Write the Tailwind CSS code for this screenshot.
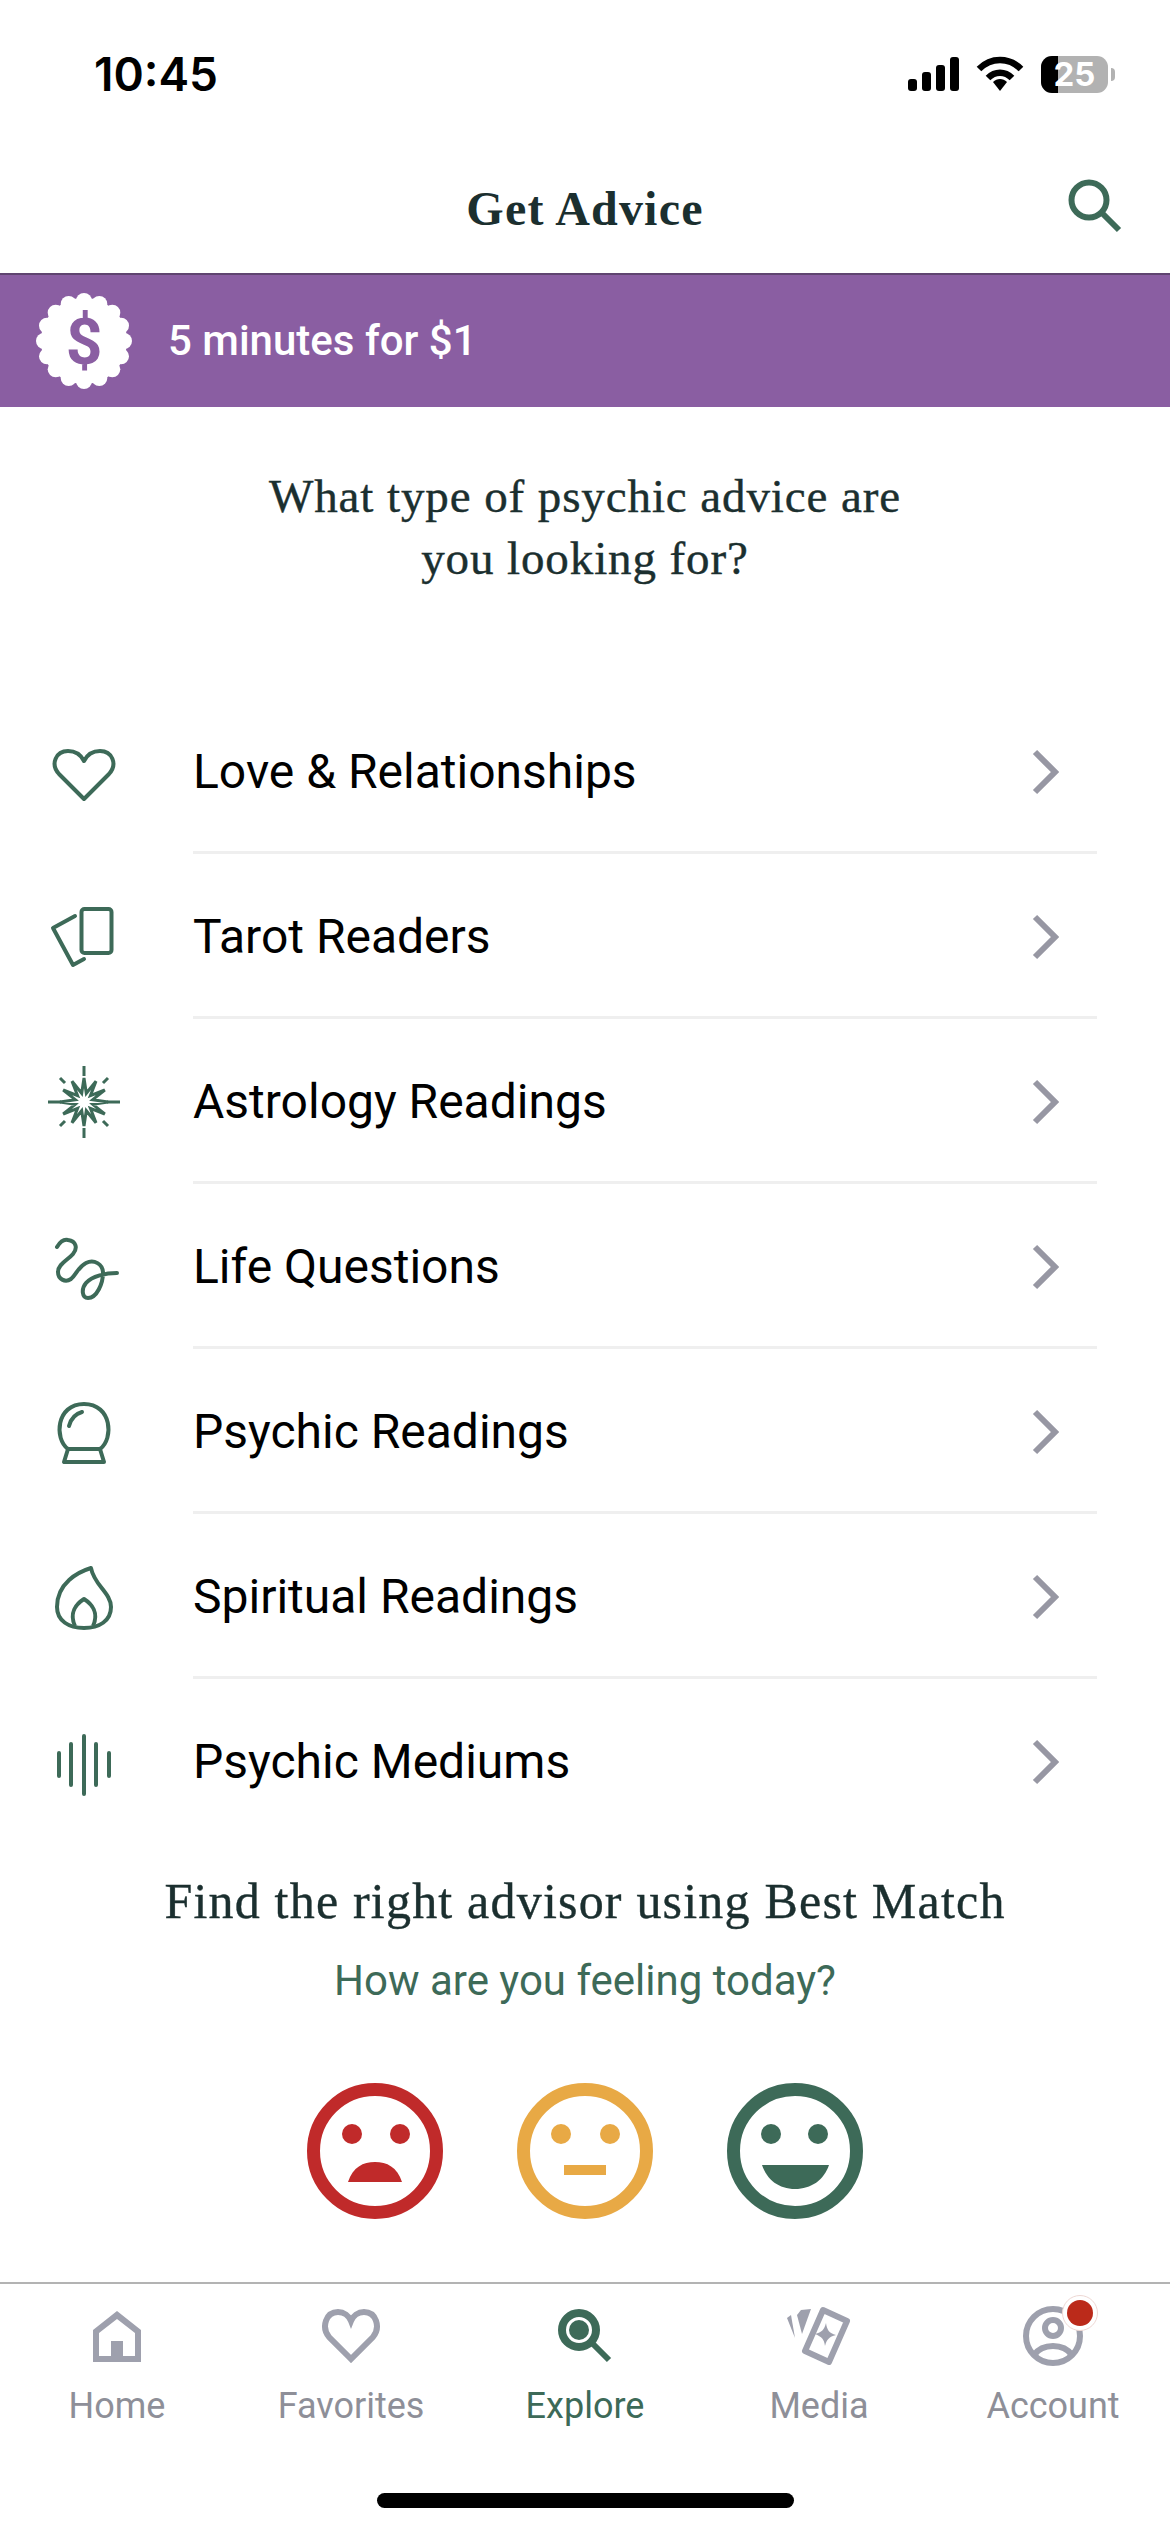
<!DOCTYPE html>
<html lang="en">
<head>
    <meta charset="UTF-8">
    <meta name="viewport" content="width=device-width, initial-scale=1.0">
    <title>Get Advice</title>
    <script src="https://cdn.jsdelivr.net/npm/@tailwindcss/browser@4"></script>
</head>
<body class="bg-white">
    <div class="w-[1170px] h-[2532px] flex flex-col bg-white overflow-hidden font-['Roboto',sans-serif]">

        <!-- Status bar -->
        <div class="h-[148px] flex items-center justify-between pl-[94px] pr-[55px] text-black">
            <span class="font-['Inter',sans-serif] font-semibold text-[46px] leading-none">10:45</span>
            <div class="flex items-center">
                <svg width="51" height="34" viewBox="0 0 51 34" fill="#000">
                    <rect x="0" y="22" width="9" height="12" rx="3"/>
                    <rect x="14" y="15" width="9" height="19" rx="3"/>
                    <rect x="28" y="8" width="9" height="26" rx="3"/>
                    <rect x="42" y="0" width="9" height="34" rx="3"/>
                </svg>
                <svg class="ml-[17px]" width="48" height="36" viewBox="0 0 48 36" fill="none" stroke="#000" stroke-width="6.5">
                    <path d="M3 13 C15 1 33 1 45 13"/>
                    <path d="M12 22 C19 15 29 15 36 22"/>
                    <path d="M17 26 L24 35 L31 26 C27 22 21 22 17 26 Z" fill="#000" stroke="none"/>
                </svg>
                <div class="ml-[17px] flex items-center">
                    <div class="relative w-[67px] h-[37px] rounded-[11px] bg-[#b2b2b2] flex items-center justify-center">
                        <div class="absolute left-0 top-0 bottom-0 w-[17px] rounded-l-[11px] bg-black"></div>
                        <span class="relative font-['Inter',sans-serif] font-bold text-[33px] leading-none text-white">25</span>
                    </div>
                    <div class="ml-[3px] w-[4px] h-[13px] rounded-r-full bg-[#b2b2b2]"></div>
                </div>
            </div>
        </div>

        <!-- Nav -->
        <div class="relative h-[125px] flex items-center justify-center">
            <h1 class="font-['Liberation_Serif',serif] font-bold text-[48px] leading-none tracking-[1.2px] text-[#1b2f2f] -mt-[4px]">Get Advice</h1>
            <svg class="absolute left-[1068px] top-[31px]" width="54" height="54" viewBox="0 0 54 54" fill="none" stroke="#3d6a58" stroke-width="6">
                <circle cx="21" cy="21" r="17.5"/>
                <path d="M33 33 L51 51"/>
            </svg>
        </div>

        <!-- Promo banner -->
        <div class="h-[134px] flex items-center pl-[36px] bg-[#8a5ea2] border-t-2 border-[#5f4470]">
            <svg width="96" height="96" viewBox="0 0 96 96" fill="#fff">
                <circle cx="48" cy="48" r="43"/>
                <circle cx="48" cy="8" r="8"/><circle cx="63.3" cy="11" r="8"/><circle cx="76.3" cy="19.7" r="8"/><circle cx="85" cy="32.7" r="8"/>
                <circle cx="88" cy="48" r="8"/><circle cx="85" cy="63.3" r="8"/><circle cx="76.3" cy="76.3" r="8"/><circle cx="63.3" cy="85" r="8"/>
                <circle cx="48" cy="88" r="8"/><circle cx="32.7" cy="85" r="8"/><circle cx="19.7" cy="76.3" r="8"/><circle cx="11" cy="63.3" r="8"/>
                <circle cx="8" cy="48" r="8"/><circle cx="11" cy="32.7" r="8"/><circle cx="19.7" cy="19.7" r="8"/><circle cx="32.7" cy="11" r="8"/>
                <text x="48" y="71" text-anchor="middle" font-family="Roboto" font-weight="700" font-size="64" fill="#8a5ea2">$</text>
            </svg>
            <span class="ml-[36px] text-[42px] font-medium leading-none text-white">5 minutes for $1</span>
        </div>

        <!-- Question -->
        <div class="h-[282px] pt-[58px] text-center font-['Liberation_Serif',serif] text-[47px] leading-[62px] tracking-[0.9px] text-[#1b2f2f] [-webkit-text-stroke:0.4px_#1b2f2f]">
            <p>What type of psychic advice are</p>
            <p>you looking for?</p>
        </div>

        <!-- Categories -->
        <div class="flex flex-col">
            <div class="h-[165px] flex items-center">
                <div class="w-[168px] flex justify-center">
                    <svg width="72" height="72" viewBox="0 0 72 72" fill="none" stroke="#3d6a58" stroke-width="4" stroke-linejoin="round">
                        <path d="M36 63 L11 38 C2 28 8 15 20 15 C27 15 33 19 36 25 C39 19 45 15 52 15 C64 15 70 28 61 38 Z"/>
                    </svg>
                </div>
                <div class="ml-[25px] w-[904px] h-full pt-[3px] flex items-center justify-between border-b-[3px] border-[#efefef] pr-[38px]">
                    <span class="text-[48px] leading-none text-black">Love &amp; Relationships</span>
                    <svg width="28" height="46" viewBox="0 0 28 46" fill="none" stroke="#9797a3" stroke-width="6"><path d="M4 3 L24 23 L4 43"/></svg>
                </div>
            </div>
            <div class="h-[165px] flex items-center">
                <div class="w-[168px] flex justify-center">
                    <svg width="72" height="72" viewBox="0 0 72 72" fill="none" stroke="#3d6a58" stroke-width="4" stroke-linecap="round" stroke-linejoin="round">
                        <rect x="33.5" y="8" width="30" height="44" rx="3"/>
                        <path d="M27 15 L5 27 L25 64 L36 58"/>
                    </svg>
                </div>
                <div class="ml-[25px] w-[904px] h-full pt-[3px] flex items-center justify-between border-b-[3px] border-[#efefef] pr-[38px]">
                    <span class="text-[48px] leading-none text-black">Tarot Readers</span>
                    <svg width="28" height="46" viewBox="0 0 28 46" fill="none" stroke="#9797a3" stroke-width="6"><path d="M4 3 L24 23 L4 43"/></svg>
                </div>
            </div>
            <div class="h-[165px] flex items-center">
                <div class="w-[168px] flex justify-center">
                    <svg width="72" height="72" viewBox="0 0 72 72" fill="none" stroke="#3d6a58" stroke-width="3">
                        <polygon points="36,12 38.3,27.3 48,15.2 42.4,29.6 56.8,24 44.7,33.7 60,36 44.7,38.3 56.8,48 42.4,42.4 48,56.8 38.3,44.7 36,60 33.7,44.7 24,56.8 29.6,42.4 15.2,48 27.3,38.3 12,36 27.3,33.7 15.2,24 29.6,29.6 24,15.2 33.7,27.3"/>
                        <path d="M36 0 V10 M36 62 V72 M0 36 H13 M59 36 H72 M12 12 L17 17 M60 12 L55 17 M12 60 L17 55 M60 60 L55 55"/>
                    </svg>
                </div>
                <div class="ml-[25px] w-[904px] h-full pt-[3px] flex items-center justify-between border-b-[3px] border-[#efefef] pr-[38px]">
                    <span class="text-[48px] leading-none text-black">Astrology Readings</span>
                    <svg width="28" height="46" viewBox="0 0 28 46" fill="none" stroke="#9797a3" stroke-width="6"><path d="M4 3 L24 23 L4 43"/></svg>
                </div>
            </div>
            <div class="h-[165px] flex items-center">
                <div class="w-[168px] flex justify-center">
                    <svg width="72" height="72" viewBox="0 0 72 72" fill="none" stroke="#3d6a58" stroke-width="4" stroke-linecap="round">
                        <path d="M9 16 C12 11 16 8 20 9 C28 10 30 17 25 23 C20 29 10 33 10 41 C10 48 17 52 23 48 C28 44 30 36 38 32 C46 28 55 33 55 42 C55 52 49 67 40 67 C34 67 33 58 38 52 C44 45 58 42 69 42"/>
                    </svg>
                </div>
                <div class="ml-[25px] w-[904px] h-full pt-[3px] flex items-center justify-between border-b-[3px] border-[#efefef] pr-[38px]">
                    <span class="text-[48px] leading-none text-black">Life Questions</span>
                    <svg width="28" height="46" viewBox="0 0 28 46" fill="none" stroke="#9797a3" stroke-width="6"><path d="M4 3 L24 23 L4 43"/></svg>
                </div>
            </div>
            <div class="h-[165px] flex items-center">
                <div class="w-[168px] flex justify-center">
                    <svg width="72" height="72" viewBox="0 0 72 72" fill="none" stroke="#3d6a58" stroke-width="4" stroke-linecap="round" stroke-linejoin="round">
                        <path d="M20 53 C6 43 8 8 36 8 C64 8 66 43 52 53 Z"/>
                        <path d="M20 53 L16 66 H56 L52 53"/>
                        <path d="M21 30 C23 22 27 18 34 16"/>
                    </svg>
                </div>
                <div class="ml-[25px] w-[904px] h-full pt-[3px] flex items-center justify-between border-b-[3px] border-[#efefef] pr-[38px]">
                    <span class="text-[48px] leading-none text-black">Psychic Readings</span>
                    <svg width="28" height="46" viewBox="0 0 28 46" fill="none" stroke="#9797a3" stroke-width="6"><path d="M4 3 L24 23 L4 43"/></svg>
                </div>
            </div>
            <div class="h-[165px] flex items-center">
                <div class="w-[168px] flex justify-center">
                    <svg width="72" height="72" viewBox="0 0 72 72" fill="none" stroke="#3d6a58" stroke-width="4" stroke-linejoin="round">
                        <path d="M43 7 C30 11 9 22 9 46 C9 60 21 67 36 67 C51 67 63 60 63 46 C63 32 46 24 43 7 Z"/>
                        <path d="M27 65 C21 52 28 43 36 38 C44 43 51 52 45 65"/>
                    </svg>
                </div>
                <div class="ml-[25px] w-[904px] h-full pt-[3px] flex items-center justify-between border-b-[3px] border-[#efefef] pr-[38px]">
                    <span class="text-[48px] leading-none text-black">Spiritual Readings</span>
                    <svg width="28" height="46" viewBox="0 0 28 46" fill="none" stroke="#9797a3" stroke-width="6"><path d="M4 3 L24 23 L4 43"/></svg>
                </div>
            </div>
            <div class="h-[165px] flex items-center">
                <div class="w-[168px] flex justify-center">
                    <svg width="72" height="72" viewBox="0 0 72 72" fill="none" stroke="#3d6a58" stroke-width="4" stroke-linecap="round">
                        <path d="M11 27 V50 M23 18 V59 M36 10 V68 M48 18 V59 M61 27 V50"/>
                    </svg>
                </div>
                <div class="ml-[25px] w-[904px] h-full flex items-center justify-between pr-[38px]">
                    <span class="text-[48px] leading-none text-black">Psychic Mediums</span>
                    <svg width="28" height="46" viewBox="0 0 28 46" fill="none" stroke="#9797a3" stroke-width="6"><path d="M4 3 L24 23 L4 43"/></svg>
                </div>
            </div>
        </div>

        <!-- Best match -->
        <div class="pt-[32px] text-center">
            <p class="font-['Liberation_Serif',serif] text-[50px] leading-[50px] tracking-[1.2px] text-[#1b2f2f] [-webkit-text-stroke:0.4px_#1b2f2f]">Find the right advisor using Best Match</p>
            <p class="mt-[32px] text-[42px] leading-[46px] text-[#3d6a58]">How are you feeling today?</p>
        </div>

        <div class="mt-[79px] flex justify-center gap-[74px]">
            <svg width="136" height="136" viewBox="0 0 136 136" fill="#c02a2a">
                <circle cx="68" cy="68" r="61.5" fill="none" stroke="#c02a2a" stroke-width="13"/>
                <circle cx="45" cy="51" r="10"/><circle cx="93" cy="51" r="10"/>
                <path d="M41 99 C46 84 56 79 68 79 C80 79 90 84 95 99 Z"/>
            </svg>
            <svg width="136" height="136" viewBox="0 0 136 136" fill="#e8a945">
                <circle cx="68" cy="68" r="61.5" fill="none" stroke="#e8a945" stroke-width="13"/>
                <circle cx="44" cy="51" r="10"/><circle cx="93" cy="51" r="10"/>
                <rect x="47" y="82" width="42" height="10"/>
            </svg>
            <svg width="136" height="136" viewBox="0 0 136 136" fill="#3d6a58">
                <circle cx="68" cy="68" r="61.5" fill="none" stroke="#3d6a58" stroke-width="13"/>
                <circle cx="44" cy="51" r="10"/><circle cx="91" cy="51" r="10"/>
                <path d="M35 82 H102 C97 97 84 106 68 106 C52 106 40 97 35 82 Z"/>
            </svg>
        </div>

        <!-- Tab bar -->
        <div class="mt-auto relative h-[250px] border-t-2 border-[#b3b3b3] grid grid-cols-5 pt-[22px] text-[#8e8f98]">
            <div class="flex flex-col items-center">
                <div class="h-[60px] flex items-center">
                    <svg width="48" height="51" viewBox="0 0 48 51" fill="#9ea0ad" fill-rule="evenodd"><path d="M24 0 L48 19 V51 H0 V19 Z M24 8 L6 22 V45 H18 V30 H30 V45 H42 V22 Z"/></svg>
                </div>
                <span class="mt-[18px] text-[36px] leading-[44px]">Home</span>
            </div>
            <div class="flex flex-col items-center">
                <div class="h-[60px] flex items-center">
                    <svg width="60" height="54" viewBox="0 0 60 54" fill="none" stroke="#9ea0ad" stroke-width="6"><path d="M30 50 L8 28 C0 18 5 3 17 3 C23 3 28 7 30 12 C32 7 37 3 43 3 C55 3 60 18 52 28 Z"/></svg>
                </div>
                <span class="mt-[18px] text-[36px] leading-[44px]">Favorites</span>
            </div>
            <div class="flex flex-col items-center text-[#3d6a58]">
                <div class="h-[60px] flex items-center">
                    <svg width="54" height="54" viewBox="0 0 54 54" fill="#3d6a58">
                        <circle cx="21" cy="21" r="17" fill="none" stroke="#3d6a58" stroke-width="8"/>
                        <circle cx="21" cy="21" r="10"/>
                        <path d="M33 33 L51 51" fill="none" stroke="#3d6a58" stroke-width="6"/>
                    </svg>
                </div>
                <span class="mt-[18px] text-[36px] leading-[44px]">Explore</span>
            </div>
            <div class="flex flex-col items-center">
                <div class="h-[60px] flex items-center">
                    <svg width="64" height="60" viewBox="0 0 64 60" fill="#9ea0ad">
                        <polygon points="0,12 4,9 8,32"/>
                        <polygon points="14,4 24,3 15,28 10,9"/>
                        <polygon points="36,4 60,15 42,56 18,45" fill="none" stroke="#9ea0ad" stroke-width="6" stroke-linejoin="round"/>
                        <path d="M39 17 C40 24 42 27 49 29 C42 31 40 33 38 40 C37 33 35 31 28 28 C35 26 37 24 39 17 Z"/>
                    </svg>
                </div>
                <span class="mt-[18px] text-[36px] leading-[44px]">Media</span>
            </div>
            <div class="flex flex-col items-center">
                <div class="relative h-[60px] flex items-center">
                    <svg width="60" height="60" viewBox="0 0 60 60" fill="none" stroke="#9ea0ad" stroke-width="6">
                        <circle cx="30" cy="30" r="27"/>
                        <circle cx="30" cy="22" r="8"/>
                        <path d="M11 49 C16 42 23 40 30 40 C37 40 44 42 49 49"/>
                    </svg>
                    <span class="absolute left-[39px] top-[-11px] w-[36px] h-[36px] rounded-full bg-white border border-[#eed8d4] flex items-center justify-center">
                        <span class="w-[26px] h-[26px] rounded-full bg-[#bb2a1a]"></span>
                    </span>
                </div>
                <span class="mt-[18px] text-[36px] leading-[44px]">Account</span>
            </div>
            <!-- Home indicator -->
            <div class="absolute left-[377px] bottom-[24px] w-[417px] h-[15px] rounded-full bg-black"></div>
        </div>
    </div>
</body>
</html>
